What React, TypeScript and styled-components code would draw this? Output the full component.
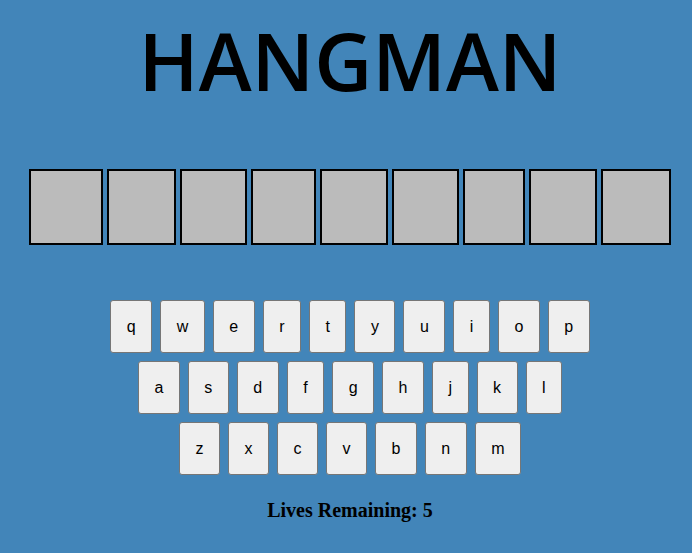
import React from "react";
import styled, { createGlobalStyle } from "styled-components";

const GlobalStyle = createGlobalStyle`
  html, body {
    margin: 0;
    padding: 0;
    background: #4285b9;
  }
  body {
    min-height: 100vh;
  }
`;

const Page = styled.div`
  display: flex;
  flex-direction: column;
  align-items: center;
  padding: 20px 0 0 8px;
  min-height: 100vh;
  box-sizing: border-box;
  background: #4285b9;
`;

const Title = styled.h1`
  margin: 0;
  font-family: "Open Sans", "DejaVu Sans", sans-serif;
  font-weight: 600;
  font-size: 80px;
  line-height: 80px;
  color: #000;
  letter-spacing: 0px;
`;

const Word = styled.div`
  display: flex;
  gap: 4px;
  margin-top: 69px;
`;

const LetterBox = styled.div<{ $w: number }>`
  width: ${(p) => p.$w}px;
  height: 76px;
  box-sizing: border-box;
  border: 2px solid #000;
  background: #bbbbbb;
`;

const Keyboard = styled.div`
  display: flex;
  flex-direction: column;
  align-items: center;
  gap: 8px;
  margin-top: 55px;
`;

const KeyRow = styled.div`
  display: flex;
  gap: 8px;
`;

const Key = styled.button`
  height: 53px;
  padding: 0 15.5px;
  margin: 0;
  border: 1px solid #767676;
  border-radius: 3px;
  background: #efefef;
  color: #000;
  font-family: "Liberation Sans", Arial, sans-serif;
  font-size: 16px;
  cursor: pointer;
`;

const Lives = styled.h3`
  margin: 24px 0 0;
  font-family: "Liberation Serif", "Times New Roman", serif;
  font-weight: bold;
  font-size: 20px;
  line-height: 23px;
  color: #000;
`;

const boxWidths = [74, 69, 67, 65, 68, 67, 62, 68, 70];
const rows = ["qwertyuiop", "asdfghjkl", "zxcvbnm"];

export default function App() {
  return (
    <>
      <GlobalStyle />
      <Page>
        <Title>HANGMAN</Title>
        <Word>
          {boxWidths.map((w, i) => (
            <LetterBox key={i} $w={w} />
          ))}
        </Word>
        <Keyboard>
          {rows.map((row) => (
            <KeyRow key={row}>
              {row.split("").map((ch) => (
                <Key key={ch}>{ch}</Key>
              ))}
            </KeyRow>
          ))}
        </Keyboard>
        <Lives>Lives Remaining: 5</Lives>
      </Page>
    </>
  );
}
